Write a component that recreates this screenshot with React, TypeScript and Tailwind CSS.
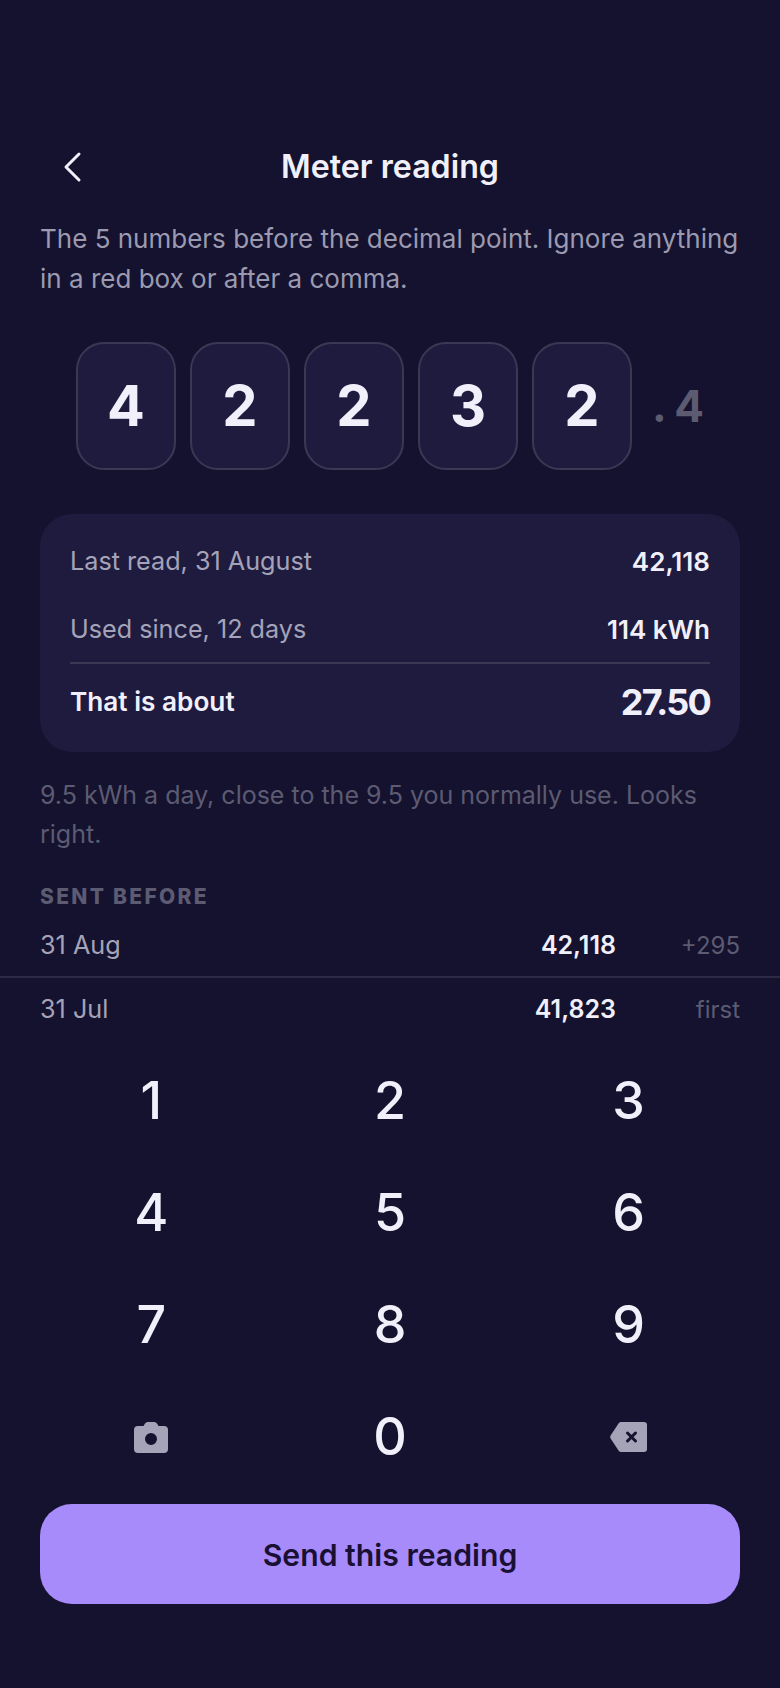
import React from "react";

function Camera() {
  return (
    <svg width="34" height="31" viewBox="0 0 34 31" fill="#a5a3b8">
      <path fillRule="evenodd" d="M9.5 4 L11 1.5 Q12 0 13.5 0 H20.5 Q22 0 23 1.5 L24.5 4 H30 A4 4 0 0 1 34 8 V27 A4 4 0 0 1 30 31 H4 A4 4 0 0 1 0 27 V8 A4 4 0 0 1 4 4 Z M17 23 A6 6 0 1 0 17 11 A6 6 0 1 0 17 23 Z" />
    </svg>
  );
}

function Backspace() {
  return (
    <svg width="37" height="30" viewBox="0 0 37 30">
      <path fill="#a5a3b8" d="M11 0 H34 A3 3 0 0 1 37 3 V27 A3 3 0 0 1 34 30 H11 Q9.5 30 8.7 28.8 L0.6 16.5 Q-0.2 15 0.6 13.5 L8.7 1.2 Q9.5 0 11 0 Z" />
      <path stroke="#14122e" strokeWidth="3" strokeLinecap="round" d="M17.5 11 L25.5 19 M25.5 11 L17.5 19" />
    </svg>
  );
}

const digits = ["4", "2", "2", "3", "2"];
const keys: React.ReactNode[] = ["1", "2", "3", "4", "5", "6", "7", "8", "9", <Camera key="c" />, "0", <Backspace key="b" />];

export default function App() {
  return (
    <div className="w-[780px] h-[1688px] bg-[#14122e] text-[#f1f0fa] font-['Inter',sans-serif] overflow-hidden flex flex-col pt-[142px]">
      <header className="relative h-[50px] mx-[40px] flex items-center justify-center">
        <svg className="absolute left-[21px] top-[9px]" width="24" height="32" viewBox="0 0 24 32" fill="none" stroke="#f1f0fa" strokeWidth="3" strokeLinecap="round" strokeLinejoin="round">
          <path d="M18 3 L5 16 L18 29" />
        </svg>
        <h1 className="text-[32.2px] font-semibold leading-[50px]">Meter reading</h1>
      </header>
      <p className="mx-[40px] mt-[27px] text-[26px] leading-[40px] text-[#9c9ab0]">The 5 numbers before the decimal point. Ignore anything in a red box or after a comma.</p>
      <div className="mt-[43px] flex items-center justify-center">
        <div className="flex gap-[14px]">
          {digits.map((d, i) => (
            <div key={i} className="w-[100px] h-[128px] rounded-[28px] bg-[#1e1b3f] border-2 border-[#3a3853] flex items-center justify-center text-[56px] font-[750]">{d}</div>
          ))}
        </div>
        <div className="ml-[20px] w-[52px] flex items-baseline justify-between text-[44px] font-bold text-[#5c5b72]"><span>.</span><span>4</span></div>
      </div>
      <section className="mx-[40px] mt-[44px] h-[238px] rounded-[32px] bg-[#1e1b3f] px-[30px] pt-[28px] flex flex-col">
        <div className="flex justify-between items-center h-[40px]"><span className="text-[25.2px] text-[#a5a3b8]">Last read, 31 August</span><span className="mb-[2px] text-[26px] font-semibold">42,118</span></div>
        <div className="flex justify-between items-center h-[40px] mt-[28px]"><span className="text-[25.2px] text-[#a5a3b8]">Used since, 12 days</span><span className="mb-[2px] text-[26px] font-semibold">114 kWh</span></div>
        <div className="h-[2px] mt-[12px] bg-[#3a3853]" />
        <div className="flex justify-between items-center h-[50px] mt-[13px]"><span className="text-[26.2px] font-semibold">That is about</span><span className="text-[36px] font-bold tracking-[-1.8px]">27.50</span></div>
      </section>
      <p className="mx-[40px] mt-[24px] text-[25px] leading-[39px] text-[#5c5b72]">9.5 kWh a day, close to the 9.5 you normally use. Looks right.</p>
      <h2 className="mx-[40px] mt-[28px] text-[21px] leading-[30px] font-extrabold tracking-[2.3px] text-[#5c5b72]">SENT BEFORE</h2>
      <div className="mt-[9px]">
        <div className="flex items-center h-[50px] mx-[40px]"><span className="flex-1 text-[25.2px] text-[#a5a3b8]">31 Aug</span><span className="text-[25px] font-semibold">42,118</span><span className="w-[124px] text-[24px] text-right text-[#5c5b72]">+295</span></div>
        <div className="h-[2px] bg-[#2c2a45] mt-[5px]" />
        <div className="flex items-center h-[50px] mx-[40px] mt-[7px]"><span className="flex-1 text-[25.2px] text-[#a5a3b8]">31 Jul</span><span className="text-[25px] font-semibold">41,823</span><span className="w-[124px] text-[24px] text-right text-[#5c5b72]">first</span></div>
      </div>
      <div className="mt-[10px] mx-[32px] grid grid-cols-3">
        {keys.map((k, i) => (
          <div key={i} className="h-[112px] flex items-center justify-center text-[52px] font-medium">{k}</div>
        ))}
      </div>
      <button className="mx-[40px] mt-[11px] h-[100px] rounded-[32px] bg-[#a78bfa] text-[#1a1033] text-[30.2px] font-semibold pt-[3px]">Send this reading</button>
    </div>
  );
}
